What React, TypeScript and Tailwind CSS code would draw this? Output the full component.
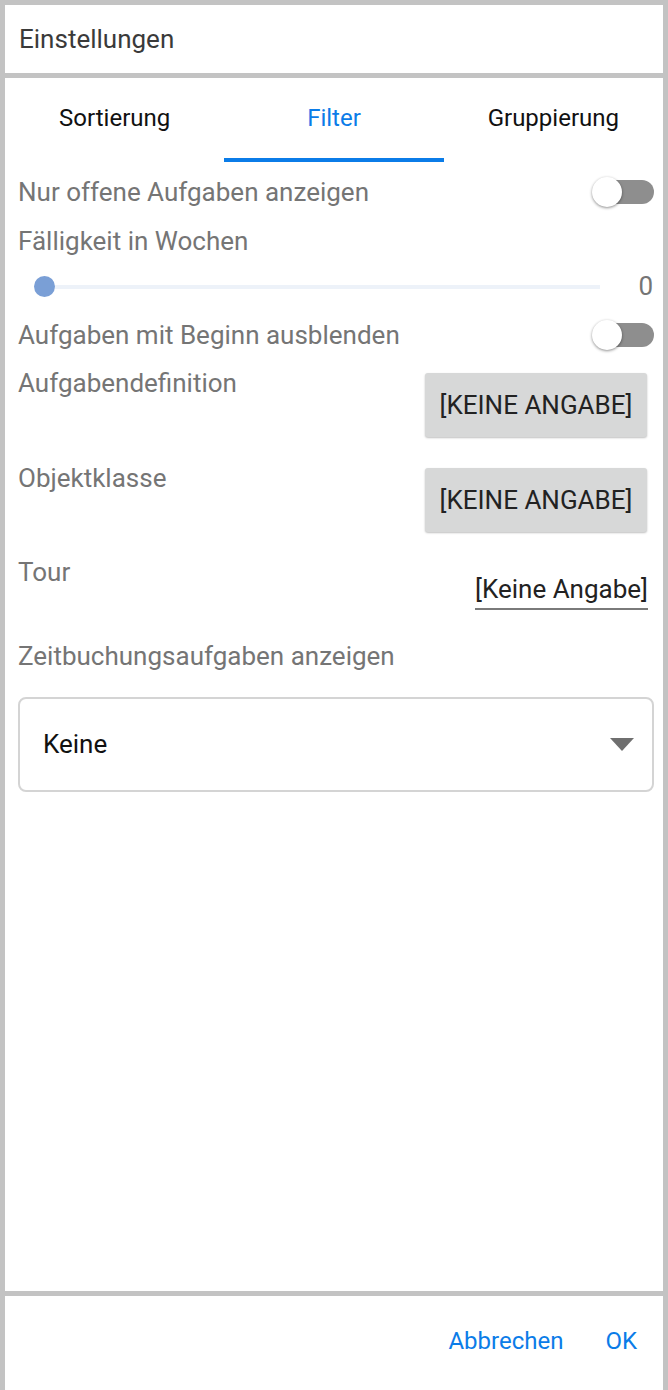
import React from "react";

function Switch() {
  return (
    <div className="relative w-[64px] h-[32px] shrink-0">
      <div className="absolute left-[8px] right-[1px] top-[4px] h-[24px] rounded-full bg-[#8e8e8e]" />
      <div className="absolute left-[1px] top-[1px] w-[30px] h-[30px] rounded-full bg-white shadow-[0_1px_3px_rgba(0,0,0,0.45)]" />
    </div>
  );
}

export default function App() {
  const font = { fontFamily: "Roboto, 'Noto Sans', sans-serif" };
  return (
    <div
      className="w-[668px] h-[1390px] bg-[#c3c3c3] pt-[5px] pl-[5px] pr-[5px] flex flex-col gap-[5px] overflow-hidden"
      style={font}
    >
      {/* Header */}
      <div className="h-[68px] bg-white flex items-center pl-[14px] shrink-0">
        <span className="text-[26px] text-[#3a3a3a] leading-none">Einstellungen</span>
      </div>

      {/* Content */}
      <div className="flex-1 bg-white flex flex-col">
        {/* Tabs */}
        <div className="grid grid-cols-3 h-[84px] shrink-0">
          <div className="flex items-center justify-center pb-[4px]">
            <span className="text-[24px] text-[#111111]">Sortierung</span>
          </div>
          <div className="relative flex items-center justify-center pb-[4px]">
            <span className="text-[24px] text-[#0b7ce8]">Filter</span>
            <div className="absolute left-0 right-0 bottom-0 h-[4px] bg-[#0b7ce8]" />
          </div>
          <div className="flex items-center justify-center pb-[4px]">
            <span className="text-[24px] text-[#111111]">Gruppierung</span>
          </div>
        </div>

        {/* Row 1 */}
        <div className="h-[60px] flex items-center justify-between pl-[13px] pr-[8px]">
          <span className="text-[26px] text-[#757575]">Nur offene Aufgaben anzeigen</span>
          <Switch />
        </div>

        {/* Fälligkeit */}
        <div className="h-[38px] flex items-center pl-[13px]">
          <span className="text-[26px] text-[#757575]">Fälligkeit in Wochen</span>
        </div>

        {/* Slider */}
        <div className="h-[52px] flex items-center pl-[29px] pr-[10px]">
          <div className="relative flex-1 h-[21px] mr-[38px]">
            <div className="absolute left-[10px] right-0 top-[9px] h-[4px] bg-[#edf2f9]" />
            <div className="absolute left-0 top-0 w-[21px] h-[21px] rounded-full bg-[#7a9fd6]" />
          </div>
          <span className="text-[26px] text-[#757575] leading-none">0</span>
        </div>

        {/* Row 2 */}
        <div className="h-[46px] flex items-center justify-between pl-[13px] pr-[8px]">
          <span className="text-[26px] text-[#757575]">Aufgaben mit Beginn ausblenden</span>
          <Switch />
        </div>

        {/* Aufgabendefinition */}
        <div className="mt-[7px] flex items-start justify-between pl-[13px] pr-[16px]">
          <span className="text-[26px] leading-[36px] text-[#757575]">Aufgabendefinition</span>
          <div className="mt-[8px] w-[222px] h-[64px] rounded-[3px] bg-[#d7d8d8] shadow-[0_1px_2px_rgba(0,0,0,0.25)] flex items-center justify-center">
            <span className="text-[26px] text-[#222222]">[KEINE ANGABE]</span>
          </div>
        </div>

        {/* Objektklasse */}
        <div className="mt-[23px] flex items-start justify-between pl-[13px] pr-[16px]">
          <span className="text-[26px] leading-[36px] text-[#757575]">Objektklasse</span>
          <div className="mt-[8px] w-[222px] h-[64px] rounded-[3px] bg-[#d7d8d8] shadow-[0_1px_2px_rgba(0,0,0,0.25)] flex items-center justify-center">
            <span className="text-[26px] text-[#222222]">[KEINE ANGABE]</span>
          </div>
        </div>

        {/* Tour */}
        <div className="mt-[22px] flex items-start justify-between pl-[13px] pr-[15px]">
          <span className="text-[26px] leading-[36px] text-[#757575]">Tour</span>
          <div className="mt-[21px] pb-[5px] border-b-2 border-[#7a7a7a]">
            <span className="block text-[26px] leading-[28px] text-[#222222]">[Keine Angabe]</span>
          </div>
        </div>

        {/* Zeitbuchung */}
        <div className="mt-[28px] pl-[13px]">
          <span className="text-[26px] leading-[36px] text-[#757575]">Zeitbuchungsaufgaben anzeigen</span>
        </div>

        {/* Select */}
        <div className="mt-[23px] ml-[13px] mr-[9px] h-[95px] rounded-[8px] border-2 border-[#d4d4d4] flex items-center justify-between pl-[23px] pr-[18px]">
          <span className="text-[26px] text-[#111111]">Keine</span>
          <svg width="24" height="13" viewBox="0 0 24 13">
            <polygon points="0,0 24,0 12,13" fill="#6f6f6f" />
          </svg>
        </div>
      </div>

      {/* Footer */}
      <div className="h-[94px] bg-white shrink-0 flex items-start justify-end pr-[26px] pt-[31px] gap-[42px]">
        <span className="text-[24px] leading-[28px] text-[#0b7ce8]">Abbrechen</span>
        <span className="text-[24px] leading-[28px] text-[#0b7ce8]">OK</span>
      </div>
    </div>
  );
}
